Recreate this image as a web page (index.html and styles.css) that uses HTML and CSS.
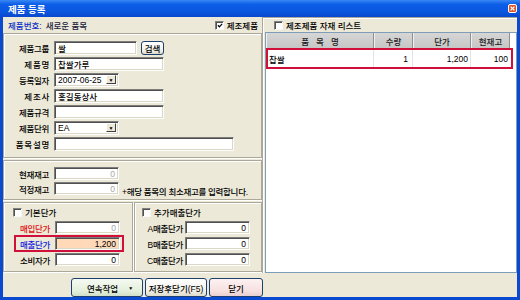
FILE: index.html
```html
<!DOCTYPE html>
<html lang="ko">
<head>
    <meta charset="UTF-8">
    <title>제품 등록</title>
    <link rel="stylesheet" href="styles.css">
</head>
<body>

<div class="window">
    <!-- Title bar -->
    <div class="titlebar">
        <span class="title">제품 등록</span>
        <span class="close-btn">
            <svg width="9" height="9" viewBox="0 0 9 9">
                <rect x="0.5" y="0.5" width="8" height="8" rx="1.5" fill="#e0542a" stroke="#fff" stroke-width="1"/>
                <path d="M2.6 2.6 L6.4 6.4 M6.4 2.6 L2.6 6.4" stroke="#fff" stroke-width="1.3"/>
            </svg>
        </span>
    </div>

    <div class="client">
        <div class="main">
            <!-- Left column: product form -->
            <div class="left-col">
                <div class="info-row">
                    <span class="code-label">제품번호:</span>
                    <span class="code-value">새로운 품목</span>
                    <span class="check-label made">
                        <span class="checkbox checked">
                            <svg width="7" height="7" viewBox="0 0 7 7"><path d="M1 3.2 L2.8 5 L6 1.5" fill="none" stroke="#000" stroke-width="1.4"/></svg>
                        </span>
                        제조제품
                    </span>
                </div>

                <div class="group group-basic">
                    <div class="field">
                        <span class="label">제품그룹</span>
                        <span class="input w-group">쌀</span>
                        <span class="btn btn-search">검색</span>
                    </div>
                    <div class="field">
                        <span class="label spaced">제 품 명</span>
                        <span class="input w-long">찹쌀가루</span>
                    </div>
                    <div class="field">
                        <span class="label">등록일자</span>
                        <span class="combo"><span class="combo-text">2007-06-25</span><span class="combo-arrow">▼</span></span>
                    </div>
                    <div class="field">
                        <span class="label spaced">제 조 사</span>
                        <span class="input w-long">홍길동상사</span>
                    </div>
                    <div class="field">
                        <span class="label">제품규격</span>
                        <span class="input w-long"></span>
                    </div>
                    <div class="field">
                        <span class="label">제품단위</span>
                        <span class="combo"><span class="combo-text">EA</span><span class="combo-arrow">▼</span></span>
                    </div>
                    <div class="field">
                        <span class="label spaced">품 목 설 명</span>
                        <span class="input w-desc"></span>
                    </div>
                </div>

                <div class="group group-stock">
                    <div class="field">
                        <span class="label">현재재고</span>
                        <span class="input num disabled">0</span>
                    </div>
                    <div class="field">
                        <span class="label">적정재고</span>
                        <span class="input num disabled">0</span>
                        <span class="hint">+해당 품목의 최소재고를 입력합니다.</span>
                    </div>
                </div>

                <div class="price-row">
                    <div class="group group-price">
                        <div class="check-label"><span class="checkbox"></span>기본단가</div>
                        <div class="field">
                            <span class="label red">매입단가</span>
                            <span class="input num disabled">0</span>
                        </div>
                        <div class="field highlight">
                            <span class="label blue">매출단가</span>
                            <span class="input num peach">1,200</span>
                        </div>
                        <div class="field">
                            <span class="label">소비자가</span>
                            <span class="input num">0</span>
                        </div>
                    </div>
                    <div class="group group-extra">
                        <div class="check-label"><span class="checkbox"></span>추가매출단가</div>
                        <div class="field">
                            <span class="label">A매출단가</span>
                            <span class="input num">0</span>
                        </div>
                        <div class="field">
                            <span class="label">B매출단가</span>
                            <span class="input num">0</span>
                        </div>
                        <div class="field">
                            <span class="label">C매출단가</span>
                            <span class="input num">0</span>
                        </div>
                    </div>
                </div>
            </div>

            <!-- Right column: material list -->
            <div class="right-col">
                <div class="check-label list-title"><span class="checkbox"></span>제조제품 자재 리스트</div>
                <div class="listview">
                    <div class="list-head">
                        <span class="col col-name spaced-head">품목명</span>
                        <span class="col col-qty">수량</span>
                        <span class="col col-price">단가</span>
                        <span class="col col-stock">현재고</span>
                    </div>
                    <div class="list-row selected">
                        <span class="col col-name">찹쌀</span>
                        <span class="col col-qty">1</span>
                        <span class="col col-price">1,200</span>
                        <span class="col col-stock">100</span>
                    </div>
                </div>
            </div>
        </div>

        <!-- Bottom buttons -->
        <div class="footer">
            <span class="btn btn-green">연속작업 <span class="drop">▼</span></span>
            <span class="btn btn-save">저장후닫기(F5)</span>
            <span class="btn btn-close">닫기</span>
        </div>
    </div>
</div>

</body>
</html>
```

FILE: styles.css
```css
* {
    margin: 0;
    padding: 0;
    box-sizing: border-box;
}

:root {
    --face: #ece9d8;
    --etch: #aca899;
    --frame: #0a4ad0;
    --red-box: #d0103a;
}

body {
    font-family: "Liberation Sans", "Noto Sans CJK KR", sans-serif;
    font-size: 8.5px;
    font-weight: 500;
    color: #000;
    background: #fff;
}

/* Window frame */
.window {
    width: 520px;
    height: 300px;
    background: var(--frame);
    display: flex;
    flex-direction: column;
}

.titlebar {
    height: 17px;
    display: flex;
    align-items: center;
    justify-content: space-between;
    padding: 0 3px 0 8px;
    background: linear-gradient(to bottom, #3a88f5 0%, #0d5ee8 25%, #0a56de 70%, #0848cc 100%);
    color: #fff;
    font-weight: bold;
    font-size: 9.5px;
}

.close-btn {
    display: flex;
    margin-top: -1px;
}

.client {
    flex: 1;
    margin: 0 3px 3px;
    background: var(--face);
    display: flex;
    flex-direction: column;
}

.main {
    display: flex;
    height: 256px;
}

/* Left column */
.left-col {
    width: 259px;
    display: flex;
    flex-direction: column;
}

.info-row {
    height: 16px;
    display: flex;
    align-items: center;
    padding: 0 4px 0 5px;
}

.code-label {
    color: #1030c8;
}

.code-value {
    margin-left: 4px;
    color: #1a1a40;
}

.check-label {
    display: flex;
    align-items: center;
    gap: 3px;
}

.made {
    margin-left: auto;
}

.checkbox {
    width: 9px;
    height: 9px;
    background: #fff;
    border: 1px solid;
    border-color: #808080 #f8f8f8 #f8f8f8 #808080;
    box-shadow: inset 1px 1px 0 #505050;
    display: flex;
    align-items: center;
    justify-content: center;
}

.checkbox svg {
    margin: 1px 0 0 1px;
}

/* Group boxes */
.group {
    border: 1px solid var(--etch);
    box-shadow: inset 1px 1px 0 #fff, 1px 1px 0 #fff;
}

.group-basic {
    height: 125px;
    padding-top: 7px;
    display: flex;
    flex-direction: column;
    gap: 2px;
}

.group-stock {
    height: 40px;
    margin-top: 2px;
    padding-top: 6px;
    display: flex;
    flex-direction: column;
    gap: 2px;
}

.group-stock .field {
    height: 13px;
}

.field {
    display: flex;
    align-items: center;
    height: 14px;
}

.label {
    width: 45px;
    margin-right: 5px;
    text-align: right;
    white-space: nowrap;
    letter-spacing: -0.3px;
}

.label.spaced {
    word-spacing: -1px;
}

.label.red {
    color: #e01010;
}

.label.blue {
    color: #1020e0;
}

.input {
    height: 100%;
    width: 65px;
    background: #fff;
    border: 1px solid;
    border-color: #7c7c7c #fdfdfd #fdfdfd #7c7c7c;
    box-shadow: inset 1px 1px 0 #505050, inset -1px -1px 0 #dcd8c8;
    padding: 0 3px;
    display: flex;
    align-items: center;
    white-space: nowrap;
}

.input.w-group { width: 83px; }
.input.w-long { width: 110px; }
.input.w-desc { width: 180px; }

.input.num {
    justify-content: flex-end;
}

.input.disabled {
    color: #a8a8a8;
}

.input.peach {
    background: #ffd9b8;
}

.hint {
    margin-left: 3px;
    white-space: nowrap;
    letter-spacing: -0.3px;
    padding-top: 4px;
}

/* Combo boxes */
.combo {
    width: 65px;
    height: 100%;
    background: #fff;
    border: 1px solid;
    border-color: #7c7c7c #fdfdfd #fdfdfd #7c7c7c;
    box-shadow: inset 1px 1px 0 #505050, inset -1px -1px 0 #dcd8c8;
    display: flex;
    align-items: stretch;
    padding: 1px 2px 2px 3px;
}

.combo-text {
    flex: 1;
    display: flex;
    align-items: center;
}

.combo-arrow {
    width: 10px;
    background: var(--face);
    border: 1px solid;
    border-color: #fff #404040 #404040 #fff;
    font-size: 5px;
    display: flex;
    align-items: center;
    justify-content: center;
}

/* Buttons */
.btn {
    display: flex;
    align-items: center;
    justify-content: center;
    border: 1px solid #1c3f6e;
    border-radius: 3px;
    background: linear-gradient(to bottom, #ffffff, #f0efe8 70%, #dedbcc);
    white-space: nowrap;
}

.btn-search {
    width: 23px;
    height: 14px;
    margin-left: 4px;
}

/* Stock + price groups */
.price-row {
    display: flex;
    gap: 1px;
    margin-top: 2px;
    height: 70px;
}

.group-price,
.group-extra {
    padding-top: 4px;
    display: flex;
    flex-direction: column;
    gap: 3px;
}

.group-price {
    width: 130px;
}

.group-extra {
    width: 128px;
}

.group-price .check-label {
    margin-left: 9px;
    height: 10px;
    margin-bottom: 1px;
}

.group-extra .check-label {
    margin-left: 7px;
    height: 10px;
    margin-bottom: 1px;
}

.group-price .field,
.group-extra .field {
    height: 13px;
}

.group-price .field {
    margin-left: 12px;
    width: 106px;
}

.group-price .label {
    width: 34px;
}

.group-extra .field {
    margin-left: 5px;
}

.group-extra .label {
    width: 43px;
    margin-right: 2px;
}

.field.highlight {
    outline: 2px solid var(--red-box);
    padding-right: 2px;
}

/* Right column */
.right-col {
    width: 255px;
    border-top: 1px solid var(--etch);
    border-left: 1px solid var(--etch);
    box-shadow: inset 1px 1px 0 #fff;
    padding-left: 2px;
    display: flex;
    flex-direction: column;
}

.list-title {
    height: 14px;
    padding-left: 9px;
}

.listview {
    flex: 1;
    background: #fff;
    border: 1px solid #7f9db9;
}

.list-head {
    display: flex;
    height: 15px;
    background: linear-gradient(to bottom, #d6d6d6, #c6c6c6);
    width: 244px;
}

.list-head .col {
    border-left: 1px solid #f0f0f0;
    border-right: 1px solid #909090;
    justify-content: center;
    color: #202020;
}

.spaced-head {
    letter-spacing: 7px;
    text-indent: 7px;
}

.col {
    display: flex;
    align-items: center;
    white-space: nowrap;
}

.col-name { width: 108px; }
.col-qty { width: 39px; }
.col-price { width: 58px; }
.col-stock { width: 39px; }

.list-row {
    display: flex;
    height: 21px;
    width: 247px;
}

.list-row.selected {
    border: 2px solid var(--red-box);
}

.list-row .col {
    border-right: 1px solid #e4e4e4;
    justify-content: flex-end;
    padding-right: 2px;
}

.list-row .col-name {
    width: 106px;
    justify-content: flex-start;
    padding-left: 1px;
}

.list-row .col-qty {
    padding-right: 4px;
}

.list-row .col-stock {
    border-right: none;
}

/* Footer buttons */
.footer {
    display: flex;
    gap: 2px;
    padding: 5px 0 0 68px;
}

.footer .btn {
    height: 19px;
}

.btn-green {
    width: 72px;
    background: linear-gradient(to bottom, #f6faf2, #e4efdc 70%, #d0e0c6);
    gap: 10px;
    padding-left: 6px;
}

.drop {
    font-size: 5px;
}

.btn-save {
    width: 62px;
}

.btn-close {
    width: 54px;
    background: linear-gradient(to bottom, #fdf2f2, #f6e0e0 70%, #ecd0d0);
}
```
